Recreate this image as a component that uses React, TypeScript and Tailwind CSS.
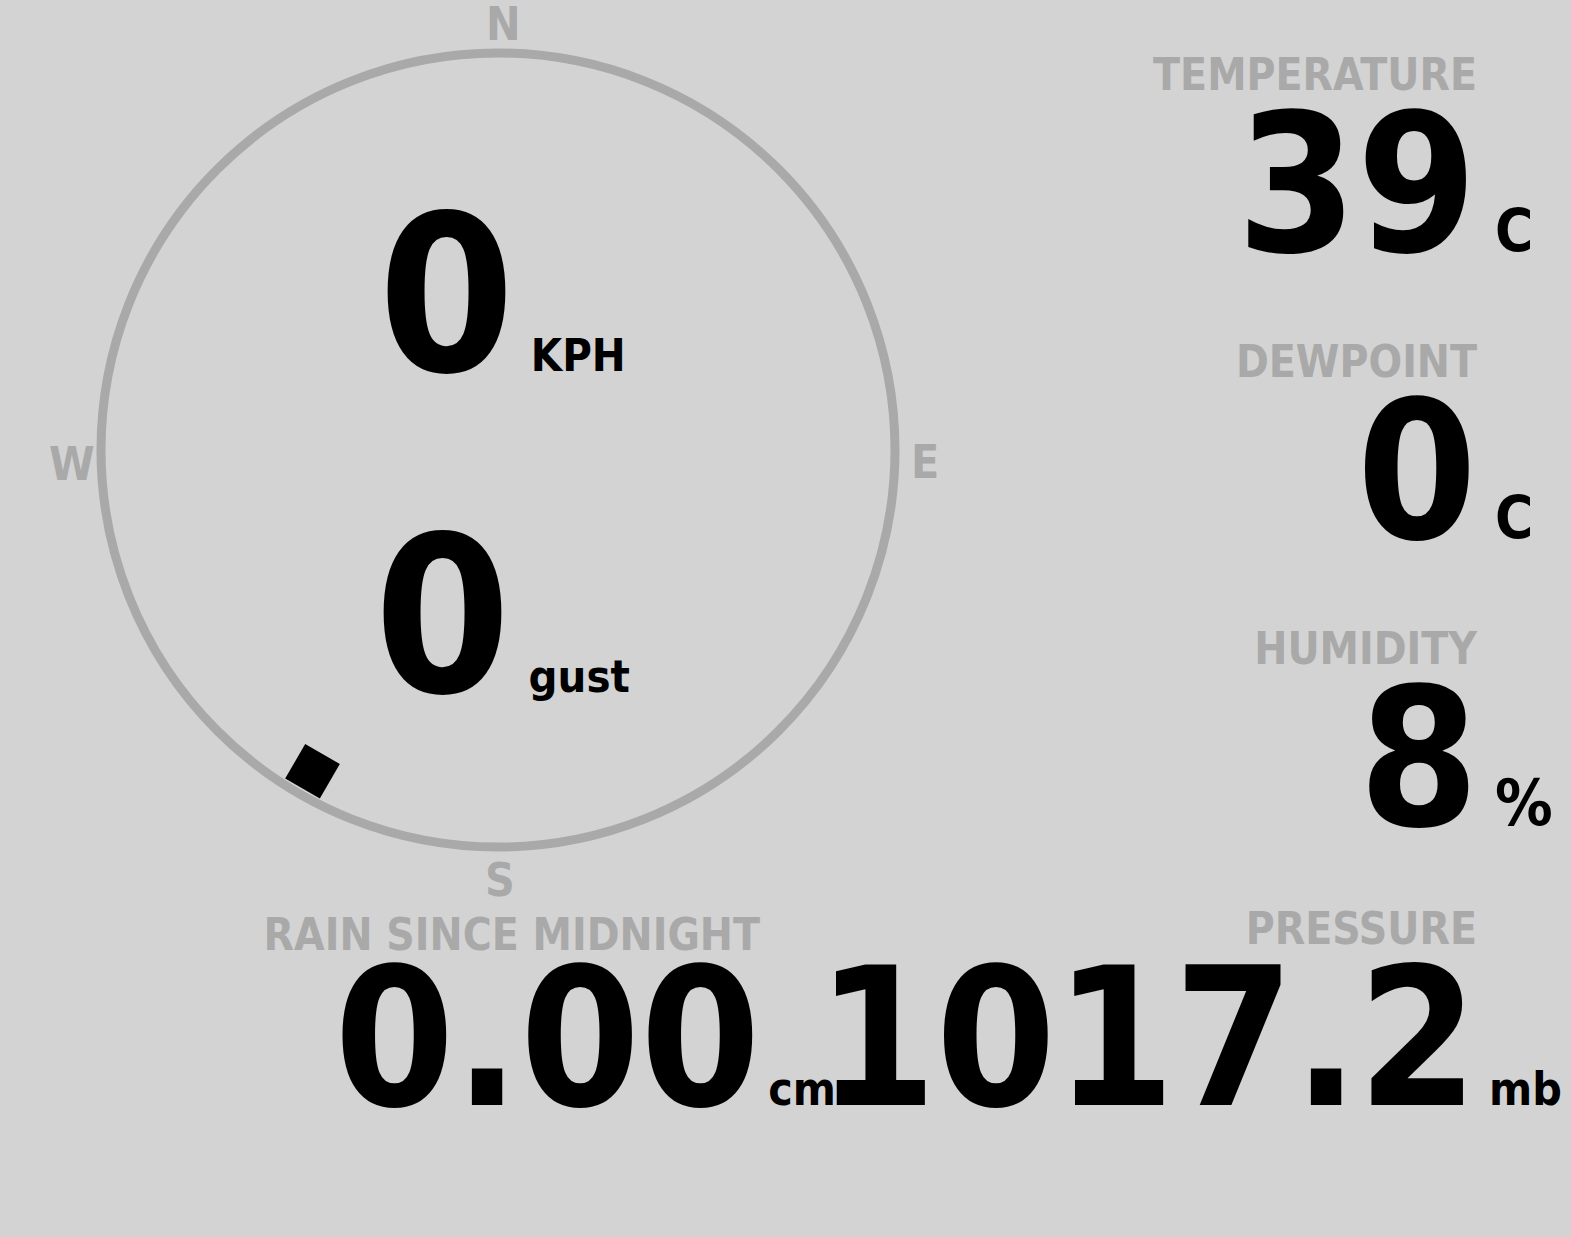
import React from "react";

const FONT = "font-['DejaVu_Sans_Condensed','DejaVu_Sans',sans-serif] font-stretch-condensed";

function Metric({ label, value, unit, unitClass }: { label: string; value: string; unit: string; unitClass: string }) {
  return (
    <div className="flex flex-col items-end">
      <div className="pr-[94px] text-[44px] leading-[44px] font-bold text-[#a9a9a9]">{label}</div>
      <div className="flex items-baseline justify-end">
        <span className="text-[192px] leading-[176px] font-bold text-black">{value}</span>
        <span className={`w-[94px] pl-[18px] font-bold text-black whitespace-nowrap ${unitClass}`}>{unit}</span>
      </div>
    </div>
  );
}

function Compass() {
  const cx = 498;
  const cy = 450;
  const r = 397;
  return (
    <div className="relative w-[996px] h-[907px] shrink-0">
      <svg className="absolute inset-0" width="996" height="907" viewBox="0 0 996 907">
        <circle cx={cx} cy={cy} r={r} fill="none" stroke="#a9a9a9" strokeWidth="9" />
        <g transform={`rotate(210 ${cx} ${cy})`}>
          <rect x={cx - 20} y={cy - 371 - 20} width="40" height="40" fill="#000" />
        </g>
      </svg>
      <span className="absolute left-[486px] top-[4px] text-[46px] leading-[40px] font-bold text-[#a9a9a9]">N</span>
      <span className="absolute left-[911px] top-[442px] text-[46px] leading-[40px] font-bold text-[#a9a9a9]">E</span>
      <span className="absolute left-[485px] top-[860px] text-[46px] leading-[40px] font-bold text-[#a9a9a9]">S</span>
      <span className="absolute left-[49px] top-[444px] text-[46px] leading-[40px] font-bold text-[#a9a9a9]">W</span>
      <div className="relative flex flex-col items-center pt-[187px] gap-[103px] pl-[8px]">
        <div className="flex items-baseline">
          <span className="text-[218px] leading-[218px] font-bold text-black">0</span>
          <span className="ml-[16px] text-[45px] font-bold text-black">KPH</span>
        </div>
        <div className="flex items-baseline">
          <span className="text-[218px] leading-[218px] font-bold text-black">0</span>
          <span className="ml-[18px] text-[45px] font-bold text-black">gust</span>
        </div>
      </div>
    </div>
  );
}

export default function App() {
  return (
    <div className={`w-[1571px] h-[1237px] overflow-hidden bg-[#d3d3d3] ${FONT}`}>
      <div className="flex h-[907px]">
        <Compass />
        <div className="flex-1 flex flex-col items-end pt-[53px] gap-[65px]">
          <Metric label="TEMPERATURE" value="39" unit="C" unitClass="text-[58px]" />
          <Metric label="DEWPOINT" value="0" unit="C" unitClass="text-[58px]" />
          <Metric label="HUMIDITY" value="8" unit="%" unitClass="text-[64px] -ml-[2px]" />
        </div>
      </div>
      <div className="flex items-end">
        <div className="w-[836px] shrink-0 flex flex-col items-end">
          <div className="pr-[76px] text-[44px] leading-[32px] font-bold text-[#a9a9a9] whitespace-nowrap">RAIN SINCE MIDNIGHT</div>
          <div className="flex items-baseline">
            <span className="text-[192px] leading-[176px] font-bold text-black">0.00</span>
            <span className="ml-[8px] text-[46px] font-bold text-black">cm</span>
          </div>
        </div>
        <div className="flex-1 min-w-0 flex flex-col items-end">
          <div className="pr-[94px] text-[44px] leading-[44px] font-bold text-[#a9a9a9]">PRESSURE</div>
          <div className="flex items-baseline justify-end w-full">
            <span className="shrink-0 text-[192px] leading-[176px] font-bold tracking-[-1px] text-black">1017.2</span>
            <span className="shrink-0 w-[94px] pl-[12px] text-[46px] font-bold text-black">mb</span>
          </div>
        </div>
      </div>
    </div>
  );
}
